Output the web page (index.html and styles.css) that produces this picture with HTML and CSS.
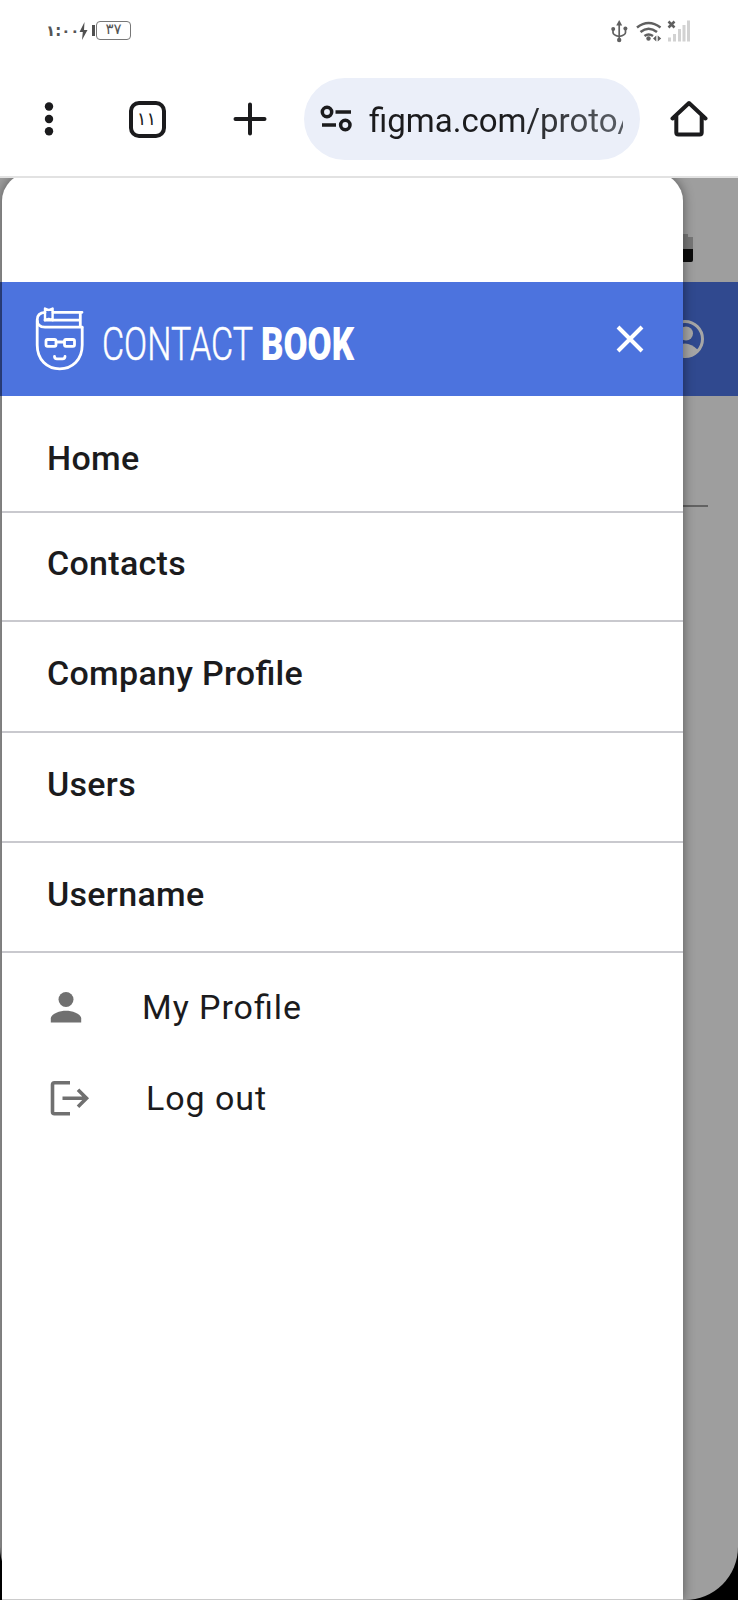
FILE: index.html
```html
<!DOCTYPE html>
<html lang="en">
<head>
<meta charset="utf-8">
<title>Contact Book</title>
<link rel="stylesheet" href="styles.css">
</head>
<body>
<div class="phone">
  <div class="status">
    <span class="clock">١:٠٠</span>
    <svg class="charge" width="9" height="18" viewBox="0 0 9 18"><path d="M5.500 0 .5 10h3.300L3 18 8.500 8H5z"/></svg>
    <i class="nub"></i>
    <span class="battery">٣٧</span>
    <svg class="signals" width="80" height="26" viewBox="0 0 80 26">
      <g fill="none" stroke="#606060" stroke-width="1.700">
        <path d="M8.200 3v18M2 9v3.500q0 2.500 6.200 4M14.500 9v3.500q0 2.500-6.300 4"/>
        <path d="M26 7.500q11.500-9 23.500 0M29.500 12q8-6.500 16.500 0M33.500 16q4-3 8.500 0" stroke-width="2.500"/>
        <path d="m57.500 1.500 6 6m0-6-6 6" stroke-width="2.500"/>
      </g>
      <g fill="#606060"><path d="m8.200 0 3 5.500h-6z"/><circle cx="2.200" cy="9" r="2"/><circle cx="14.400" cy="8.500" r="2"/><circle cx="8.200" cy="20" r="2.200"/><circle cx="37.500" cy="18.500" r="2.200"/><path d="m42 18.500 3.300-3v6zM50.200 18.500l-3.500-3v6z"/></g>
      <g fill="#d2d2d2"><path d="M57 17.500h3v4h-3zM62 14h3v7.500h-3zM67 9h3v12.500h-3zM71.500 5h3v16.500h-3zM76 .5h3v21h-3z"/></g>
    </svg>
  </div>
  <div class="toolbar">
    <svg class="dots" width="10" height="34" viewBox="0 0 10 34"><circle cx="5" cy="4.500" r="4.200"/><circle cx="5" cy="17" r="4.200"/><circle cx="5" cy="29.300" r="4.200"/></svg>
    <span class="tabs">١١</span>
    <svg class="plus" width="34" height="34" viewBox="0 0 34 34"><path d="M17 2.500v29M2.500 17h29"/></svg>
    <div class="url">
      <svg width="32" height="28" viewBox="0 0 32 28"><circle cx="7" cy="7" r="4.700"/><circle cx="25.300" cy="20" r="4.700"/><path d="M15.500 7h15.500M2 20h14"/></svg>
      <span class="address">figma.com/proto/</span>
    </div>
    <svg class="house" width="38" height="38" viewBox="0 0 38 38"><path d="M2.500 18.500 19 3l16.500 15.500M6.300 16v16.500q0 2 2 2h21.400q2 0 2-2V16"/></svg>
  </div>
  <div class="viewport">
    <div class="page">
      <svg class="page-battery" width="12" height="30" viewBox="0 0 12 30"><path d="M0 1h5v3h5v23q0 2-2 2H0z" fill="#777"/><path d="M0 16h10v11q0 2-2 2H0z" fill="#0c0c0c"/></svg>
      <div class="page-bar">
        <svg width="40" height="40" viewBox="0 0 40 40"><circle cx="20" cy="20" r="17.500"/><circle class="fill" cx="21" cy="14.500" r="7"/><path class="fill" d="M7 31q13-13 26 0-13 13-26 0z"/></svg>
      </div>
      <i class="page-line"></i>
    </div>
    <div class="drawer">
      <header class="brand">
        <svg class="mark" width="80" height="80" viewBox="0 0 80 80">
          <path d="M17.200 15v24c0 15 10 23.800 22.500 23.800s22.500-8.800 22.500-23.800V22"/>
          <path d="M62.200 21.200H25q-7.800 0-7.800-7.200 0-7.500 7.800-7.700M33 6.300h29M60.300 7v13M25 14.200h35"/>
          <path class="ribbon" d="M25 2.500 28.800 4l3.800-1.500v11.700L28.800 13 25 14.200z"/>
          <rect x="26" y="33.500" width="10" height="6.800" rx="1.500"/><rect x="44.500" y="33.500" width="10" height="6.800" rx="1.500"/>
          <path d="M37 36h7M34.500 50.500q0 2.300 2.500 2.300h5.500q2.500 0 2.500-2.300"/>
        </svg>
        <svg class="thin" width="156" height="80" viewBox="0 0 156 80"><text x="2" y="54" textLength="151" lengthAdjust="spacingAndGlyphs">CONTACT</text></svg>
        <svg class="heavy" width="100" height="80" viewBox="0 0 100 80"><text x="5" y="54" textLength="93" lengthAdjust="spacingAndGlyphs">BOOK</text></svg>
        <svg class="close" width="30" height="30" viewBox="0 0 30 30"><path d="m3 3 24 24m0-24L3 27"/></svg>
      </header>
      <nav class="menu">
        <a class="item home">Home</a>
        <a class="item contacts">Contacts</a>
        <a class="item company">Company Profile</a>
        <a class="item">Users</a>
        <a class="item">Username</a>
      </nav>
      <div class="account">
        <a class="action"><svg width="32" height="32" viewBox="0 0 32 32"><circle cx="16" cy="8.500" r="7.500" fill="#707070"/><path d="M.8 31.500v-4C.8 22.500 10 19.700 16 19.700S31.200 22.500 31.200 27.500v4z" fill="#707070"/></svg><span class="profile">My Profile</span></a>
        <a class="action logout"><svg width="40" height="36" viewBox="0 0 40 36"><g fill="none" stroke="#707070" stroke-width="3.600"><path d="M20 2.800H4.500q-2 0-2 2v27q0 2 2 2H20M12.500 18.300H37M28 9.800l8.500 8.500-8.500 8.500"/></g></svg><span>Log out</span></a>
      </div>
    </div>
  </div>
</div>
</body>
</html>
```
FILE: styles.css
```css
* { box-sizing: border-box; }
body { margin: 0; background: #fff; font-family: Roboto, "DejaVu Sans", sans-serif; color: #1b1b1d; }
svg { flex: none; display: block; }
.phone { width: 738px; height: 1600px; display: flex; flex-direction: column; overflow: hidden; }

.status { height: 62px; padding: 20px 46px 0; display: flex; align-items: flex-start; color: #555; }
.clock { width: 33px; font: bold 15px/22px "DejaVu Sans", sans-serif; white-space: nowrap; letter-spacing: -1.2px; }
.charge { margin-top: 2px; fill: #505050; }
.nub { width: 3px; height: 11px; margin: 5px 1px 0 4px; background: #505050; }
.battery { width: 35px; height: 19px; margin-top: 1px; border: 1.5px solid #777; border-radius: 4px; font: 15px/15px "DejaVu Sans", sans-serif; text-align: center; }
.signals { margin-left: auto; margin-right: 1px; }

.toolbar { height: 116px; border-bottom: 2px solid #e2e2e2; display: flex; align-items: center; padding: 0 29px 0 44px; }
.dots { fill: #1b1b1d; }
.tabs { width: 37px; height: 37px; margin-left: 75px; border: 4px solid #1b1b1d; border-radius: 10px; font: 18px/27px "DejaVu Sans", sans-serif; letter-spacing: -2px; text-indent: -2px; text-align: center; }
.plus { margin-left: 67px; fill: none; stroke: #1b1b1d; stroke-width: 4; stroke-linecap: round; }
.url { width: 336px; height: 82px; margin-left: 37px; padding-left: 16px; border-radius: 41px; background: #ebeff9; display: flex; align-items: center; }
.url svg { fill: none; stroke: #1b1b1d; stroke-width: 3.5; }
.address { width: 254px; margin-left: 17px; padding-top: 3px; overflow: hidden; white-space: nowrap; font-size: 33px; line-height: 42px; color: transparent; background: linear-gradient(90deg, #1b1b1d 55%, #555960 95%); background-clip: text; -webkit-background-clip: text; }
.house { margin-left: 30px; fill: none; stroke: #1b1b1d; stroke-width: 4; stroke-linecap: round; stroke-linejoin: round; }

.viewport { flex: 1; position: relative; overflow: hidden; background: #000; }
.page { height: 100%; border-radius: 0 0 53px 53px; background: #9e9e9e; display: flex; flex-direction: column; align-items: flex-end; overflow: hidden; }
.page-battery { margin: 55px 43px 0 0; }
.page-bar { width: 100%; height: 114px; margin-top: 19px; padding: 37px 33px 0 0; background: #30498f; display: flex; justify-content: flex-end; }
.page-bar svg { fill: none; stroke: #a6a6a6; stroke-width: 3; }
.page-bar .fill { fill: #a6a6a6; stroke: none; }
.page-line { width: 60px; height: 2px; margin: 109px 30px 0 0; background: #626262; }

/* The drawer overlays the dimmed page */
.drawer { position: absolute; left: 2px; top: -5px; width: 681px; bottom: 0; padding-top: 109px; background: #fff; border-bottom: 1px solid #ccc; border-radius: 28px 28px 0 0; box-shadow: 0 0 12px rgba(0, 0, 0, .45); }
.brand { height: 114px; background: #4c73de; padding: 24px 38px 0 18px; display: flex; align-items: flex-start; }
.mark { fill: none; stroke: #fff; stroke-width: 2.8; stroke-linejoin: round; stroke-linecap: round; }
.ribbon { stroke-width: 2.4; }
.thin, .heavy { fill: #fff; font-size: 46px; font-weight: 300; overflow: visible; }
.thin { stroke: #fff; stroke-width: .5; }
.heavy { font-weight: 900; }
.close { margin: 18px 0 0 auto; fill: none; stroke: #fff; stroke-width: 4; }
.menu { display: flex; flex-direction: column; }
.item { height: 110px; padding: 31px 45px 0; border-bottom: 2px solid #c9c9ce; font-size: 34px; line-height: 40px; font-weight: 500; letter-spacing: .3px; font-feature-settings: "liga"; }
.home { height: 117px; padding-top: 42px; }
.contacts { height: 109px; padding-top: 30px; }
.company { height: 111px; }
.account { padding: 32px 48px 0; display: flex; flex-direction: column; gap: 47px; }
.action { height: 44px; display: flex; align-items: center; font-size: 34px; line-height: 44px; letter-spacing: .95px; font-feature-settings: "liga"; }
.profile { margin-left: 60px; }
.logout svg { margin-right: 56px; }
```
